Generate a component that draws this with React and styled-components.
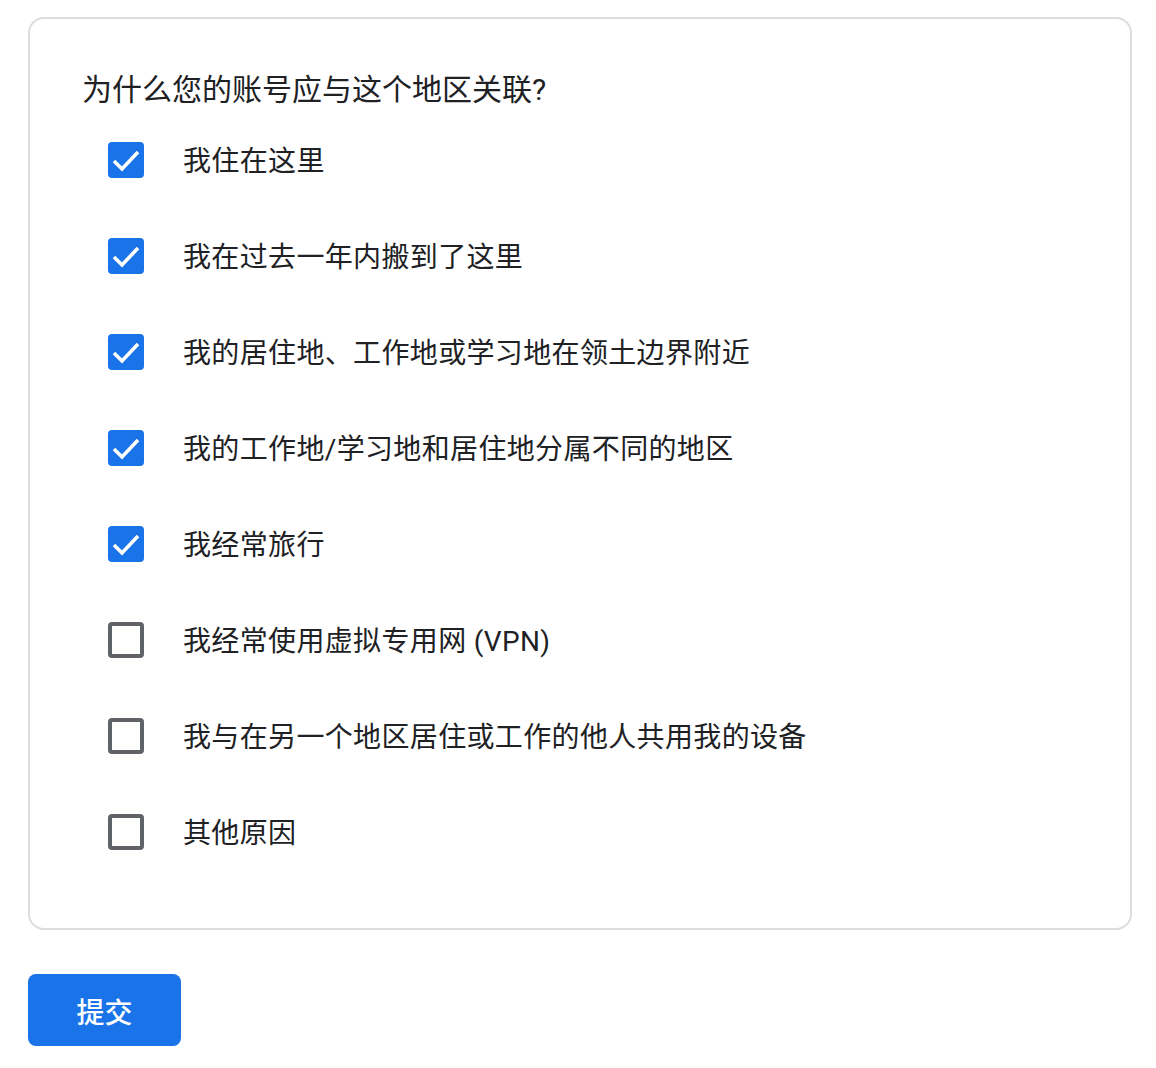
import { useState } from "react";
import styled, { createGlobalStyle } from "styled-components";

const GlobalStyle = createGlobalStyle`
  body {
    margin: 0;
    background: #ffffff;
    font-family: Roboto, "Noto Sans CJK SC", sans-serif;
    color: #202124;
  }
`;

const Page = styled.div`
  padding: 17px 24px 20px 28px;
`;

const Card = styled.section`
  width: 1104px;
  box-sizing: border-box;
  border: 2px solid #dadce0;
  border-radius: 16px;
  padding: 51px 52px 48px;
`;

const Question = styled.h2`
  margin: 0 0 2px;
  font-size: 30px;
  line-height: 40px;
  font-weight: 400;
  color: #202124;
`;

const Options = styled.ul`
  list-style: none;
  margin: 0;
  padding: 0 0 0 26px;
`;

const Option = styled.li`
  height: 96px;
  display: flex;
  align-items: center;
  gap: 39px;
  cursor: pointer;
  user-select: none;
`;

const Box = styled.span`
  width: 36px;
  height: 36px;
  flex: none;
  box-sizing: border-box;
  border-radius: 4px;
  display: flex;
  align-items: center;
  justify-content: center;
  background: ${(p) => (p.$checked ? "#1a73e8" : "#ffffff")};
  border: ${(p) => (p.$checked ? "none" : "4px solid #5f6368")};
`;

const Label = styled.span`
  padding-top: 4px;
  font-size: 28px;
  line-height: 40px;
  letter-spacing: 0.35px;
  color: #202124;
`;

const Submit = styled.button`
  margin-top: 44px;
  width: 153px;
  height: 72px;
  padding-top: 2px;
  border: none;
  border-radius: 8px;
  background: #1a73e8;
  color: #ffffff;
  font-family: Roboto, "Noto Sans CJK SC", sans-serif;
  font-size: 28px;
  font-weight: 500;
  cursor: pointer;
`;

const reasons = [
  ["我住在这里", true],
  ["我在过去一年内搬到了这里", true],
  ["我的居住地、工作地或学习地在领土边界附近", true],
  ["我的工作地/学习地和居住地分属不同的地区", true],
  ["我经常旅行", true],
  ["我经常使用虚拟专用网 (VPN)", false],
  ["我与在另一个地区居住或工作的他人共用我的设备", false],
  ["其他原因", false],
];

const Check = () => (
  <svg width="36" height="36" viewBox="0 0 36 36">
    <polyline
      points="6,19 14,27 30,10"
      fill="none"
      stroke="#ffffff"
      strokeWidth="3.6"
      strokeLinecap="butt"
      strokeLinejoin="miter"
    />
  </svg>
);

const App = () => {
  const [checked, setChecked] = useState(reasons.map((r) => r[1]));

  const toggle = (i) =>
    setChecked((prev) => prev.map((v, j) => (j === i ? !v : v)));

  return (
    <Page>
      <GlobalStyle />
      <Card>
        <Question>为什么您的账号应与这个地区关联?</Question>
        <Options>
          {reasons.map(([text], i) => (
            <Option key={text} onClick={() => toggle(i)}>
              <Box $checked={checked[i]}>{checked[i] && <Check />}</Box>
              <Label>{text}</Label>
            </Option>
          ))}
        </Options>
      </Card>
      <Submit>提交</Submit>
    </Page>
  );
};

export default App;
